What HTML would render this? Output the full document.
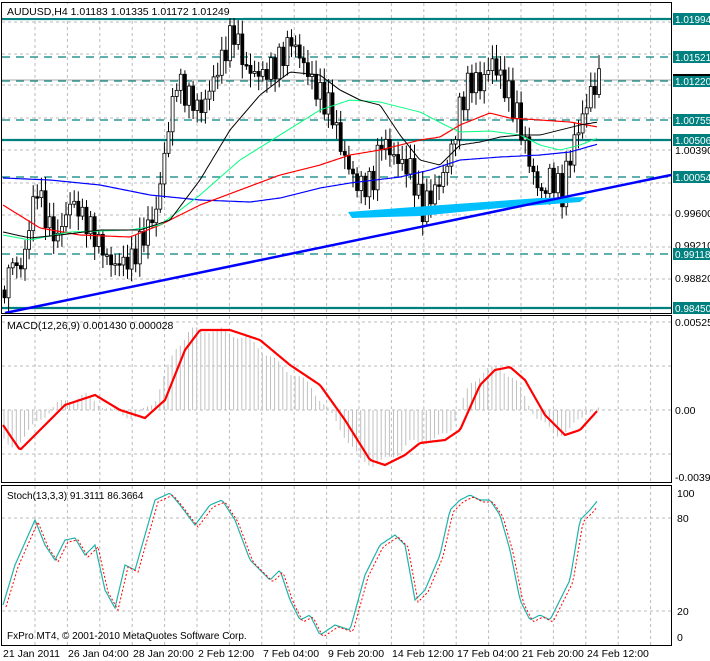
<!DOCTYPE html>
<html><head><meta charset="utf-8"><style>
html,body{margin:0;padding:0;background:#fff;width:710px;height:661px;overflow:hidden}
svg{display:block}
text{font-family:"Liberation Sans",sans-serif;font-size:10.5px;fill:#000}
</style></head><body>
<svg id="s" width="710" height="661" xmlns="http://www.w3.org/2000/svg">
<rect width="710" height="661" fill="#fff"/>
<g id="grid"></g>
<g id="hl"></g>
<g id="main"></g>
<g id="macd"></g>
<g id="stoch"></g>
<rect x="1.5" y="2.5" width="670" height="311" fill="none" stroke="#000"/>
<rect x="1.5" y="315.5" width="670" height="167" fill="none" stroke="#000"/>
<rect x="1.5" y="485.5" width="670" height="160" fill="none" stroke="#000"/>
<rect x="3" y="4" width="240" height="14" fill="#fff"/>
<text x="7" y="15">AUDUSD,H4  1.01183 1.01335 1.01172 1.01249</text>
<text x="7" y="329">MACD(12,26,9) 0.001430 0.000028</text>
<text x="7" y="499" style="font-size:10px">Stoch(13,3,3) 91.3111 86.3664</text>
<text x="7" y="639" style="font-size:10px">FxPro MT4, © 2001-2010 MetaQuotes Software Corp.</text>
<g id="lbl" style="font-size:10px">
<text x="675" y="154">1.00390</text>
<text x="675" y="217">0.99600</text>
<text x="675" y="249">0.99210</text>
<text x="675" y="282">0.98820</text>
<text x="675" y="326">0.00525</text>
<text x="675" y="414">0.00</text>
<text x="675" y="481">-0.00393</text>
<text x="677" y="497">100</text>
<text x="677" y="522">80</text>
<text x="677" y="615">20</text>
<text x="677" y="641">0</text>
</g>
<g style="font-size:10px">
<text x="3" y="657">21 Jan 2011</text>
<text x="68" y="657">26 Jan 04:00</text>
<text x="133" y="657">28 Jan 20:00</text>
<text x="198" y="657">2 Feb 12:00</text>
<text x="263" y="657">7 Feb 04:00</text>
<text x="328" y="657">9 Feb 20:00</text>
<text x="392" y="657">14 Feb 12:00</text>
<text x="457" y="657">17 Feb 04:00</text>
<text x="522" y="657">21 Feb 20:00</text>
<text x="587" y="657">24 Feb 12:00</text>
</g>
<g id="tags"></g>
</svg>
<script>
(function(){
var NS="http://www.w3.org/2000/svg";
function el(p,t,a){var e=document.createElementNS(NS,t);for(var k in a)e.setAttribute(k,a[k]);document.getElementById(p).appendChild(e);return e;}
function interp(k,x){if(x<=k[0][0])return k[0][1];for(var i=0;i<k.length-1;i++){if(x>=k[i][0]&&x<=k[i+1][0]){var t=(x-k[i][0])/(k[i+1][0]-k[i][0]);return k[i][1]+t*(k[i+1][1]-k[i][1]);}}return k[k.length-1][1];}
function pts(k,x0,x1,noise){var s=[];for(var x=x0;x<=x1;x+=2){var n=noise?Math.sin(x*1.7)*noise+Math.sin(x*0.53)*noise:0;s.push(x+","+(interp(k,x)+n).toFixed(1));}return s.join(" ");}
var gx;
for(gx=35;gx<671;gx+=32.4){[[3,313],[316,482],[486,645]].forEach(function(r){el("grid","line",{x1:gx,x2:gx,y1:r[0],y2:r[1],stroke:"#bbb","stroke-dasharray":"3,3"});});}
[22,54,85,118,150,183,215,247,279,322,366,454,518,611].forEach(function(y){el("grid","line",{x1:2,x2:671,y1:y,y2:y,stroke:"#bbb","stroke-dasharray":"3,3"});});
el("grid","line",{x1:2,x2:671,y1:410,y2:410,stroke:"#bbb","stroke-dasharray":"3,3"});
var T="#00807f";
[[19,0],[57,1],[81,1],[120,1],[140,0],[177,1],[254,1],[308,0]].forEach(function(h){var a={x1:2,x2:671,y1:h[0],y2:h[0],stroke:T,"stroke-width":h[1]?1.2:2.2};if(h[1])a["stroke-dasharray"]="8,6";el("hl","line",a);});
el("hl","line",{x1:2,x2:671,y1:80,y2:80,stroke:"#aaa"});
var ck=[[3,290],[10,260],[20,270],[35,185],[45,220],[55,240],[70,200],[90,230],[110,265],[130,260],[145,230],[155,210],[165,140],[175,80],[185,95],[200,110],[210,85],[220,60],[232,30],[245,70],[260,75],[275,65],[290,40],[300,60],[315,90],[330,110],[340,150],[355,185],[370,185],[380,140],[395,160],[410,170],[420,210],[430,195],[440,180],[450,150],[460,100],[470,80],[480,85],[490,60],[500,80],[510,100],[520,130],[530,170],[540,195],[550,175],[560,195],[570,150],[580,120],[590,90],[598,80]];
var prev=interp(ck,3);
for(var x=3;x<=598;x+=4.1){var c=interp(ck,x)+Math.sin(x*2.3)*9+Math.sin(x*0.9)*6;var o=prev;var tp=Math.min(o,c),bt=Math.max(o,c);if(bt-tp<1.5)bt=tp+1.5;var hi=tp-3-Math.abs(Math.sin(x*3.1))*11,lo=bt+3+Math.abs(Math.cos(x*2.7))*11;
el("main","line",{x1:x+1.5,x2:x+1.5,y1:hi,y2:lo,stroke:"#000"});
el("main","rect",{x:x,y:tp,width:3,height:bt-tp,fill:c>o?"#000":"#fff",stroke:"#000","stroke-width":0.8});prev=c;}
el("main","polyline",{points:pts([[3,178],[50,180],[100,185],[150,195],[200,200],[250,202],[280,198],[320,188],[350,183],[400,177],[430,170],[460,160],[500,157],[540,155],[570,152],[598,144]],3,598,0),fill:"none",stroke:"#0000ff","stroke-width":1.2});
el("main","polyline",{points:pts([[3,205],[40,228],[80,235],[130,237],[160,225],[200,205],[240,190],[280,175],[320,165],[350,155],[380,150],[420,140],[440,137],[460,125],[490,113],[510,118],[540,120],[570,122],[598,127]],3,598,0),fill:"none",stroke:"#ff0000","stroke-width":1.2});
el("main","polyline",{points:pts([[3,235],[30,240],[70,232],[130,230],[160,225],[200,195],[240,160],[280,135],[320,110],[350,100],[380,102],[420,112],[445,125],[460,132],[490,131],[520,135],[540,145],[560,150],[580,145],[598,138]],3,598,0),fill:"none",stroke:"#00ff7f","stroke-width":1});
el("main","polyline",{points:pts([[3,232],[30,238],[60,235],[100,230],[140,230],[170,220],[200,180],[230,130],[260,95],[290,72],[320,75],[340,90],[360,100],[380,105],[400,135],[420,160],[440,165],[460,145],[480,142],[500,137],[520,135],[540,135],[560,130],[580,125],[598,122]],3,598,0),fill:"none",stroke:"#000","stroke-width":1});
el("main","polygon",{points:"348,212 352,218 420,216 500,208 580,202 586,197 540,198 470,203 400,208",fill:"#00bfff"});
el("main","line",{x1:5,y1:313,x2:671,y2:175,stroke:"#0000ff","stroke-width":2.5});
var mk=[[3,425],[20,450],[40,430],[65,405],[95,395],[120,410],[145,418],[165,400],[185,350],[200,330],[230,330],[260,340],[290,365],[320,385],[345,420],[370,460],[385,465],[405,455],[420,443],[445,440],[460,430],[480,385],[495,370],[510,367],[525,380],[545,415],[565,435],[580,430],[598,410]];
for(var m=4;m<=600;m+=4.1){var v=interp(mk,m+10)+Math.sin(m*1.3)*3;el("macd","line",{x1:m,x2:m,y1:410,y2:v,stroke:"#c0c0c0"});}
el("macd","polyline",{points:pts(mk,3,598,0),fill:"none",stroke:"#ff0000","stroke-width":2.2});
var sk=[[3,605],[15,565],[35,520],[45,545],[55,560],[65,540],[75,538],[85,555],[95,545],[105,590],[115,608],[125,565],[135,570],[145,535],[155,500],[170,493],[180,505],[195,525],[210,505],[222,500],[235,520],[250,560],[260,570],[270,580],[280,570],[290,600],[300,620],[310,615],[320,635],[335,625],[350,630],[365,575],[380,545],[395,535],[405,545],[415,600],[425,590],[440,555],[450,510],[460,500],[470,495],[480,500],[490,500],[500,515],[510,550],[520,600],[530,620],[540,615],[550,620],[560,600],[570,580],[580,520],[590,510],[598,500]];
el("stoch","polyline",{points:pts(sk,3,598,0),fill:"none",stroke:"#20b2aa","stroke-width":1.2});
var sk2=sk.map(function(p){return [p[0]+3,p[1]+2];});
el("stoch","polyline",{points:pts(sk2,6,596,0),fill:"none",stroke:"#ff0000","stroke-dasharray":"2,2"});
[[19,"1.01994"],[57,"1.01521"],[81,"1.01220"],[120,"1.00755"],[140,"1.00506"],[177,"1.00054"],[254,"0.99118"],[308,"0.98450"]].forEach(function(t){el("tags","rect",{x:673,y:t[0]-6,width:37,height:12,fill:T});var e=el("tags","text",{x:675,y:t[0]+4,style:"fill:#fff;font-size:10px"});e.textContent=t[1];});
el("tags","rect",{x:673,y:74,width:37,height:2,fill:"#000"});
})();
</script>
</body></html>
